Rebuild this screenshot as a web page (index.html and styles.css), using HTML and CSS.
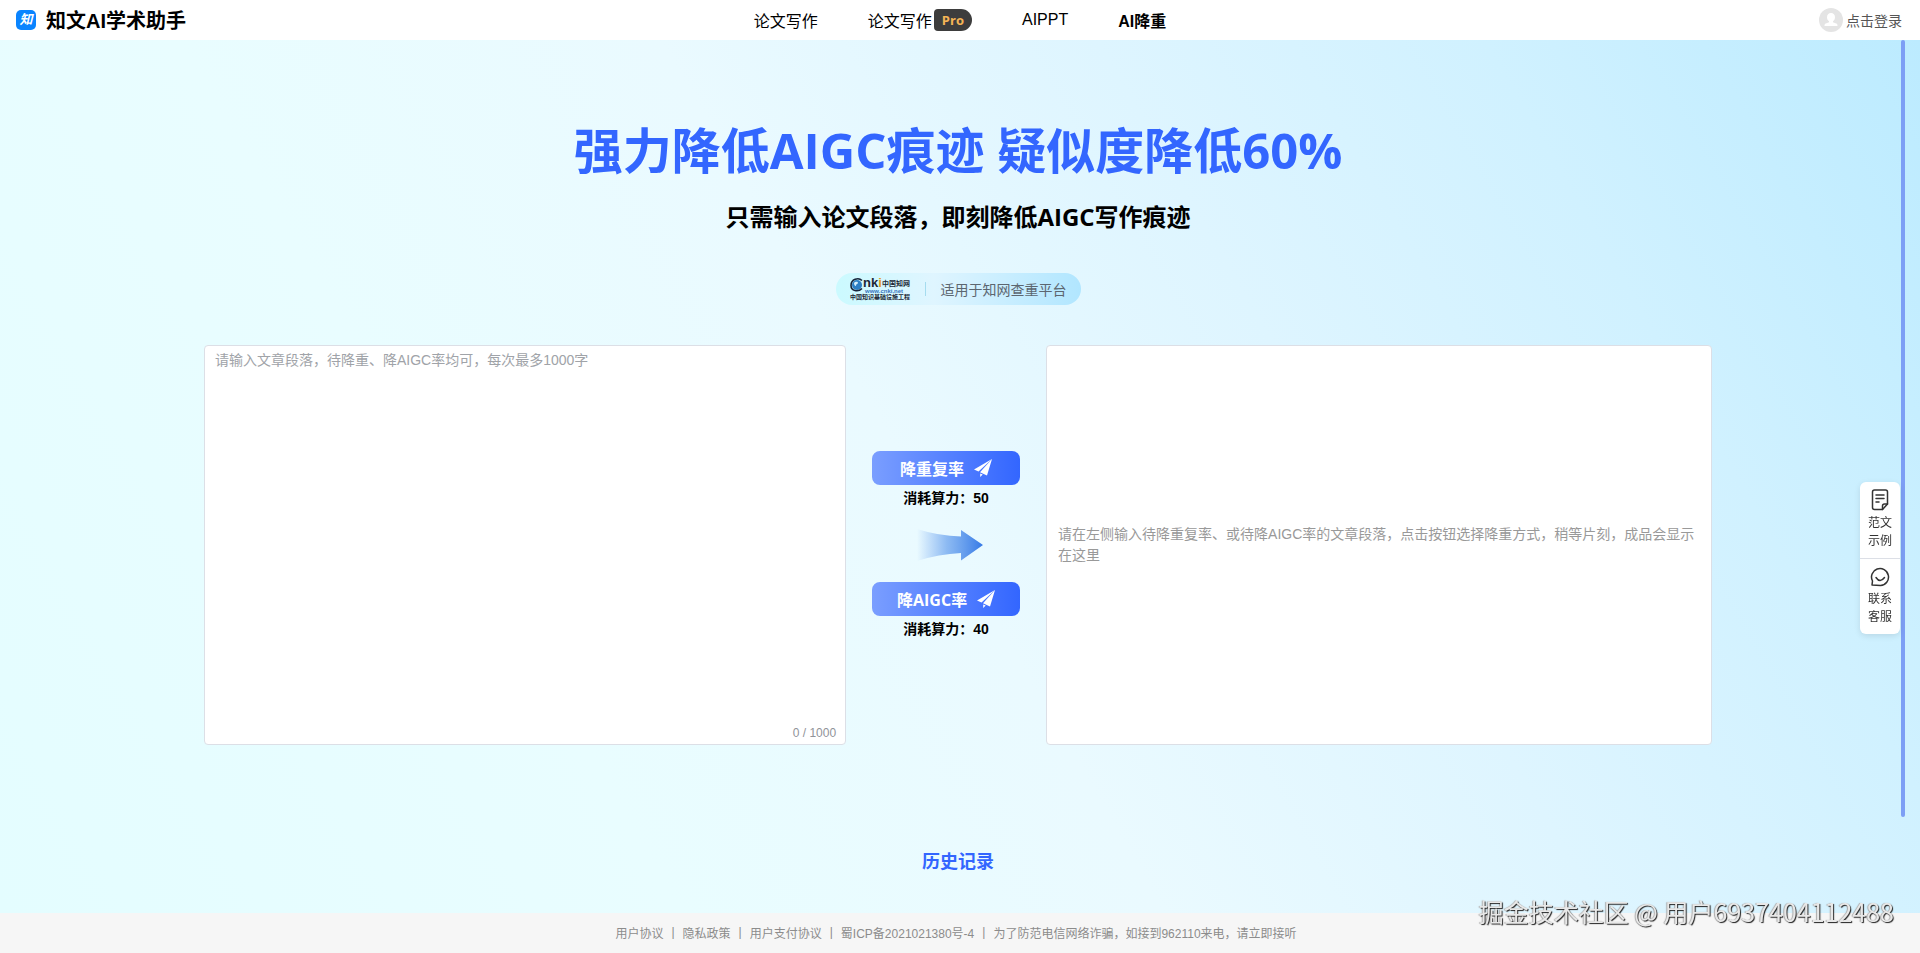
FILE: index.html
```html
<!DOCTYPE html>
<html lang="zh-CN">
<head>
  <meta charset="UTF-8">
  <meta name="viewport" content="width=device-width, initial-scale=1.0">
  <title>知文AI学术助手</title>
  <link rel="stylesheet" href="styles.css">
</head>
<body>
  <header class="header">
    <a class="brand" href="#">
      <span class="brand-icon">知</span>
      <span>知文AI学术助手</span>
    </a>
    <nav class="nav">
      <a href="#">论文写作</a>
      <a class="nav-pro" href="#">论文写作<span class="pro">Pro</span></a>
      <a href="#">AIPPT</a>
      <a class="active" href="#">AI降重</a>
    </nav>
    <button class="login" type="button">
      <svg width="24" height="24" viewBox="0 0 24 24">
        <circle cx="12" cy="12" r="12" fill="#e4e4e4"/>
        <path d="M12 5c2.500 0 4 1.800 4 4.200 0 1.800-.8 3.200-2 4v1l3.200 1.200c1 .4 1.300 1 1.300 2.600h-13c0-1.600.3-2.200 1.300-2.600L10 14.200v-1c-1.200-.8-2-2.200-2-4C8 6.800 9.500 5 12 5z" fill="#fff"/>
      </svg>
      <span>点击登录</span>
    </button>
  </header>

  <main class="main">
    <h1>强力降低AIGC痕迹 疑似度降低60%</h1>
    <h2>只需输入论文段落，即刻降低AIGC写作痕迹</h2>

    <div class="platform">
      <svg class="cnki" width="60" height="24" viewBox="0 0 60 24">
        <circle cx="7" cy="8" r="5" fill="#2d7fc4"/>
        <path d="M4 6c2-2 4-1 4 0s-2 1-2 2.500-2 0-2-2.500z" fill="#d5effc"/>
        <path d="M12 3.500C8.500 0 1 2 1 8.500c0 5.500 7 7 11 3" fill="none" stroke="#16243a" stroke-width="1.600"/>
        <text class="cnki-name" x="13" y="10">nk<tspan fill="#e39a20">i</tspan></text>
        <text class="cnki-cn" x="32" y="9">中国知网</text>
        <text class="cnki-url" x="15" y="16">www.cnki.net</text>
        <text class="cnki-sub" x="0" y="22">中国知识基础设施工程</text>
      </svg>
      <span class="platform-line"></span>
      <span>适用于知网查重平台</span>
    </div>

    <div class="editor">
      <div class="input-box">
        <textarea id="source" maxlength="1000" aria-label="文章段落" placeholder="请输入文章段落，待降重、降AIGC率均可，每次最多1000字"></textarea>
        <span class="count"><span id="count">0</span> / 1000</span>
      </div>

      <div class="actions">
        <button class="action" type="button">
          <span>降重复率</span>
          <svg width="18" height="18" viewBox="0 0 18 18">
            <path d="M18 0L0 10.500l4.500 2zM18 0L6 13.300l7 3.200zM6.200 14.500v3.500l2.500-2.400z" fill="#fff"/>
          </svg>
        </button>
        <p class="cost">消耗算力：50</p>
        <svg class="arrow" width="74" height="32" viewBox="-8 0 74 32">
          <defs>
            <linearGradient id="arrowFill" x1="0" x2="1" y1="0" y2="0">
              <stop offset="0" stop-color="#5b95ee" stop-opacity="0"/>
              <stop offset="0.450" stop-color="#5b98ec" stop-opacity="0.650"/>
              <stop offset="1" stop-color="#3579e6"/>
            </linearGradient>
          </defs>
          <path d="M0 0Q22 7 44 7.500V1l22 15-22 15.500V24Q22 25 0 32z" fill="url(#arrowFill)"/>
        </svg>
        <button class="action" type="button">
          <span>降AIGC率</span>
          <svg width="18" height="18" viewBox="0 0 18 18">
            <path d="M18 0L0 10.500l4.500 2zM18 0L6 13.300l7 3.200zM6.200 14.500v3.500l2.500-2.400z" fill="#fff"/>
          </svg>
        </button>
        <p class="cost">消耗算力：40</p>
      </div>

      <div class="output-box">请在左侧输入待降重复率、或待降AIGC率的文章段落，点击按钮选择降重方式，稍等片刻，成品会显示在这里</div>
    </div>

    <a class="history" href="#">历史记录</a>
  </main>

  <footer class="footer">
    <a href="#">用户协议</a>
    <span>|</span>
    <a href="#">隐私政策</a>
    <span>|</span>
    <a href="#">用户支付协议</a>
    <span>|</span>
    <a href="#">蜀ICP备2021021380号-4</a>
    <span>|</span>
    <span>为了防范电信网络诈骗，如接到962110来电，请立即接听</span>
  </footer>

  <div class="scroll-line"></div>

  <aside class="side">
    <button type="button">
      <svg width="18" height="22" viewBox="0 0 18 22" fill="none" stroke="#333" stroke-width="1.500" stroke-linejoin="round" stroke-linecap="round">
        <path d="M3.500 1h11Q16.500 1 16.500 3v12l-5 5.500h-8Q1.500 20.500 1.500 18.500V3Q1.500 1 3.500 1z"/>
        <path d="M16.500 15h-3q-2 0-2 2v3.500M5 6h8M5 9.500h8M5 13h3"/>
      </svg>
      <span>范文<br>示例</span>
    </button>
    <button type="button">
      <svg width="20" height="20" viewBox="0 0 20 20" fill="none" stroke="#333" stroke-width="1.500" stroke-linejoin="round" stroke-linecap="round">
        <path d="M2 18l.5-4A8.500 8.500 0 1 1 10.500 18.500z"/>
        <path d="M6 10.500q4 6 8.500 0"/>
      </svg>
      <span>联系<br>客服</span>
    </button>
  </aside>

  <div class="watermark">掘金技术社区 @ 用户6937404112488</div>

  <script>
    const source = document.getElementById('source');
    const count = document.getElementById('count');

    // Update the word counter
    source.addEventListener('input', () => {
      count.textContent = source.value.length;
    });
  </script>
</body>
</html>
```
FILE: styles.css
```css
* {
  box-sizing: border-box;
}

body {
  margin: 0;
  min-height: 100vh;
  display: flex;
  flex-direction: column;
  font-family: "Liberation Sans", "Noto Sans CJK SC", sans-serif;
  font-size: 14px;
  color: #000;
  background: #fff;
}

a {
  color: inherit;
  text-decoration: none;
}

button {
  padding: 0;
  border: none;
  background: none;
  font-family: inherit;
  color: inherit;
  cursor: pointer;
}

/* Header */
.header {
  display: grid;
  grid-template-columns: 1fr auto 1fr;
  align-items: center;
  height: 40px;
  padding: 0 18px 0 16px;
}

.brand {
  display: flex;
  align-items: center;
  gap: 10px;
  padding-bottom: 1px;
  font-size: 20px;
  font-weight: bold;
}

.brand-icon {
  width: 20px;
  height: 20px;
  border-radius: 5px;
  background: #0a84ff;
  color: #fff;
  font-size: 13px;
  font-style: italic;
  line-height: 20px;
  text-align: center;
}

.nav {
  display: flex;
  align-items: center;
  gap: 50px;
  padding: 0 0 1px 2px;
  font-size: 16px;
}

.nav-pro {
  display: flex;
  align-items: center;
  gap: 2px;
}

.pro {
  padding: 0 8px;
  border-radius: 4px 11px 11px 4px;
  background: #3d3d3d;
  color: #f5b556;
  font-family: "Open Sans", sans-serif;
  font-size: 13px;
  font-weight: bold;
  line-height: 22px;
}

.active {
  font-weight: bold;
}

.login {
  justify-self: end;
  display: flex;
  align-items: center;
  gap: 3px;
  font-size: 14px;
  color: #555;
}

/* Main */
.main {
  flex: 1;
  display: flex;
  flex-direction: column;
  align-items: center;
  padding: 76px 4px 0 0;
  background: linear-gradient(60deg, #e4fdff 0%, #e9fdff 28%, #eafaff 48%, #def5ff 66%, #d0f1ff 82%, #bcebff 100%);
}

h1 {
  margin: 0;
  font-family: "Open Sans", "Noto Sans CJK SC", sans-serif;
  font-size: 49px;
  line-height: 68px;
  color: #3366ff;
}

h2 {
  margin: 16px 0 0;
  font-family: "Open Sans", "Noto Sans CJK SC", sans-serif;
  font-size: 24px;
  line-height: 34px;
}

.platform {
  display: flex;
  align-items: center;
  height: 32px;
  margin-top: 39px;
  padding: 0 14px;
  border-radius: 16px;
  background: linear-gradient(90deg, #cbfaff, #dff5ff 40%, #b1e6ff);
  color: #5c6670;
}

.platform-line {
  width: 1px;
  height: 14px;
  margin: 0 15px;
  background: #a5dcef;
}

.cnki {
  overflow: visible;
}

.cnki text {
  font-weight: bold;
  fill: #1b2735;
}

.cnki .cnki-name {
  font-size: 13px;
}

.cnki .cnki-cn {
  font-size: 7px;
}

.cnki .cnki-url {
  font-size: 6px;
  fill: #3574bd;
}

.cnki .cnki-sub {
  font-size: 6px;
}

.editor {
  display: grid;
  grid-template-columns: 27fr 200px 28fr;
  width: 90%;
  max-width: 1508px;
  min-height: 400px;
  margin-top: 40px;
}

.input-box {
  position: relative;
  display: flex;
}

.input-box textarea,
.output-box {
  padding: 4px 11px;
  border: 1px solid #dcdfe6;
  border-radius: 4px;
  background: #fff;
  font-family: inherit;
  font-size: 14px;
  line-height: 21px;
}

.input-box textarea {
  flex: 1;
  padding: 4px 10px;
  resize: none;
  outline: none;
}

.input-box textarea::placeholder {
  color: #a0a3a8;
}

.count {
  position: absolute;
  right: 10px;
  bottom: 5px;
  font-size: 12px;
  color: #909399;
}

.output-box {
  display: flex;
  align-items: center;
  color: #999;
}

.actions {
  display: flex;
  flex-direction: column;
  align-items: center;
  justify-content: center;
}

.action {
  display: flex;
  align-items: center;
  justify-content: center;
  gap: 10px;
  width: 148px;
  height: 34px;
  border-radius: 8px;
  background: linear-gradient(90deg, #7a9eff, #3366ff);
  color: #fff;
  font-family: "Open Sans", "Noto Sans CJK SC", sans-serif;
  font-size: 16px;
  font-weight: bold;
}

.cost {
  margin: 3px 0 0;
  font-weight: bold;
  line-height: 20px;
}

.arrow {
  margin: 21px 0;
}

.history {
  margin: 104px 0 36px;
  font-size: 18px;
  font-weight: bold;
  line-height: 26px;
  color: #3366ff;
}

/* Footer */
.footer {
  display: flex;
  align-items: center;
  justify-content: center;
  gap: 8px;
  height: 40px;
  padding: 0 8px 2px 0;
  background: #f6f6f6;
  font-size: 12px;
  color: #8c8c8c;
}

/* Floating items */
.scroll-line {
  position: fixed;
  top: 40px;
  right: 15px;
  bottom: 136px;
  width: 4px;
  border-radius: 2px;
  background: #7d9ff5;
}

.side {
  position: fixed;
  top: 482px;
  right: 20px;
  width: 40px;
  border-radius: 6px;
  background: #fff;
  box-shadow: 0 2px 6px rgba(0, 0, 0, 0.1);
}

.side button {
  display: flex;
  flex-direction: column;
  align-items: center;
  justify-content: center;
  gap: 3px;
  width: 100%;
  height: 76px;
  padding-bottom: 1px;
  font-size: 12px;
  line-height: 18px;
  color: #333;
}

.side button + button {
  border-top: 1px solid #dcdfe6;
}

.watermark {
  position: fixed;
  right: 26px;
  bottom: 24px;
  font-family: "Noto Sans CJK SC", sans-serif;
  font-size: 25px;
  line-height: 36px;
  color: #e8e8e8;
  text-shadow: 1px 1px 1px #222, -1px 0 1px #aaa;
  pointer-events: none;
}
```
